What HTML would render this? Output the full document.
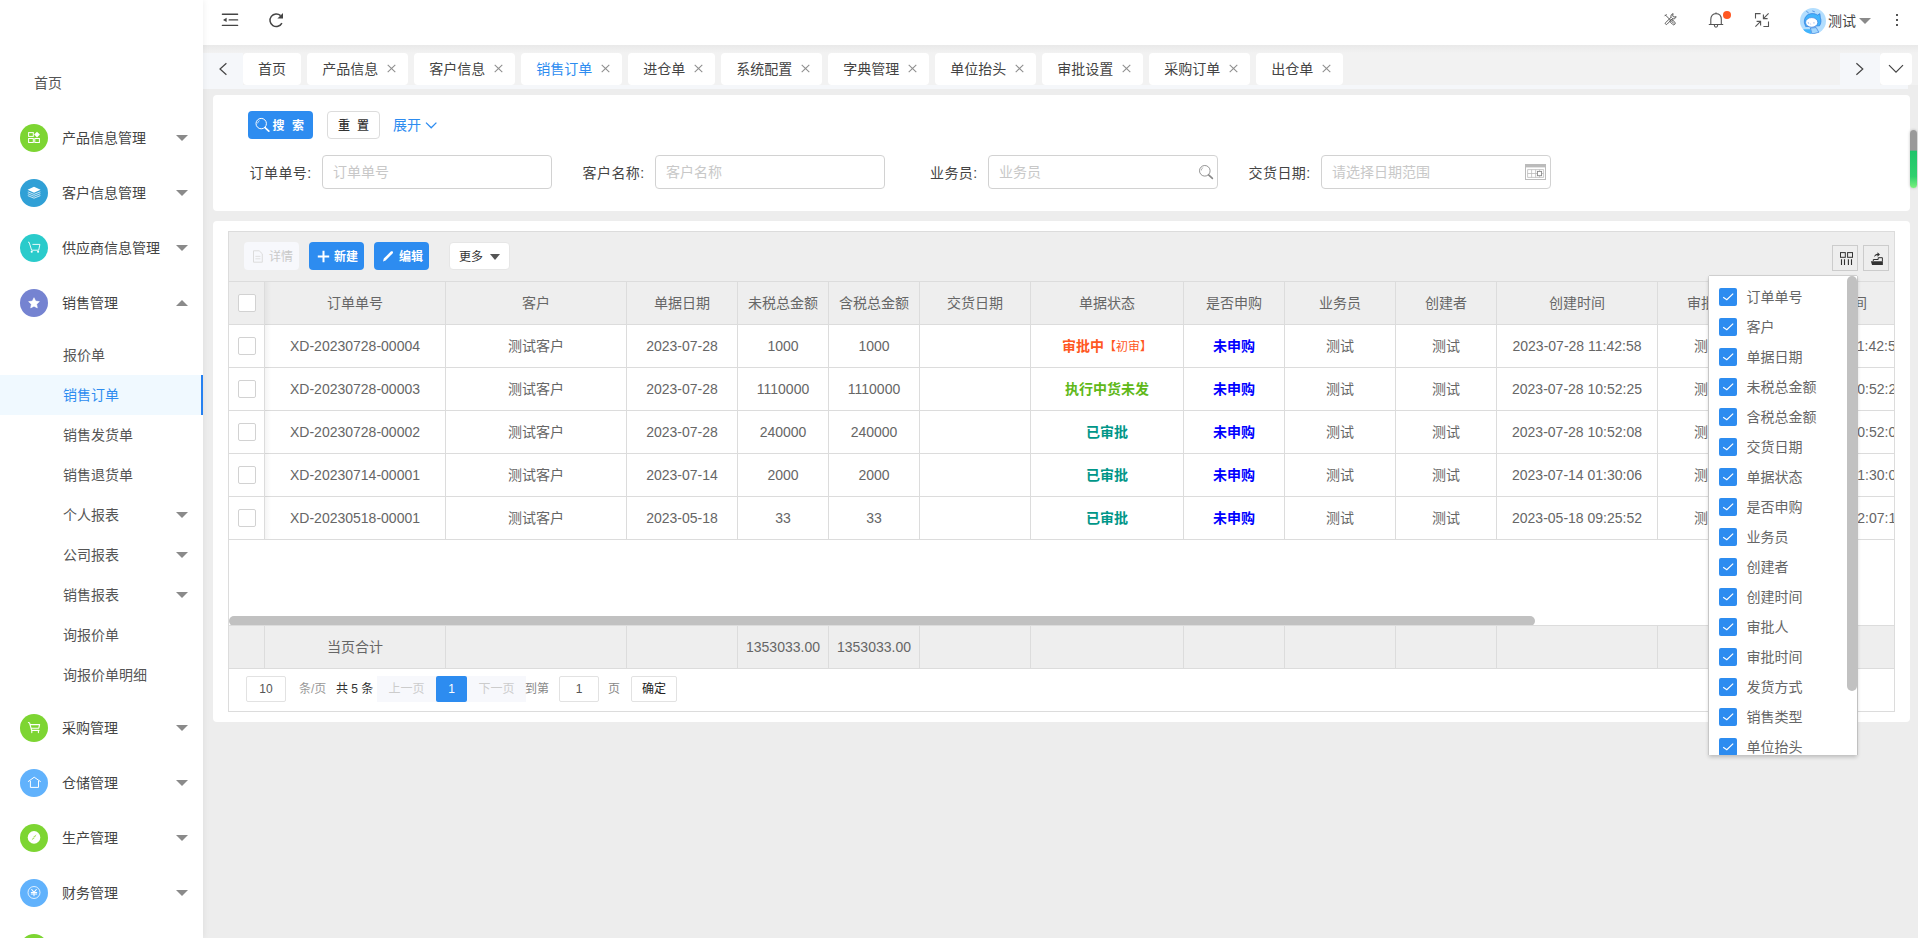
<!DOCTYPE html>
<html lang="zh-CN">
<head>
<meta charset="utf-8">
<title>销售订单</title>
<style>
*{box-sizing:border-box;margin:0;padding:0}
html,body{width:1918px;height:938px;overflow:hidden;background:#ededed}
body{font-family:"Liberation Sans","Noto Sans CJK SC",sans-serif;font-size:14px;color:#555;position:relative}
#side{position:absolute;left:0;top:0;width:203px;height:938px;background:#fff;overflow:hidden;z-index:5;box-shadow:1px 0 6px rgba(0,0,0,.06)}
#side .home{position:absolute;left:34px;top:73px;line-height:20px;color:#555}
.mi{position:absolute;left:0;width:203px;height:55px}
.mi .ic{position:absolute;left:20px;top:14px;width:28px;height:28px;border-radius:50%}
.mi .ic svg{position:absolute;left:0;top:0;width:28px;height:28px}
.mi .tx{position:absolute;left:62px;top:18px;line-height:20px;color:#444}
.car{position:absolute;left:176px;width:0;height:0;border-left:6px solid transparent;border-right:6px solid transparent}
.car.d{border-top:6px solid #8a8a8a}
.car.u{border-bottom:6px solid #8a8a8a}
.mi .car{top:25px}
.si{position:absolute;left:0;width:203px;height:40px}
.si .tx{position:absolute;left:63px;top:10px;line-height:20px;color:#555}
.si .car{top:17px}
.si.on{background:#f0f9ff;border-right:2px solid #2680f0}
.si.on .tx{color:#2d8cf0}
#hd{position:absolute;left:203px;top:0;width:1715px;height:45px;background:#fff}
#hd svg{position:absolute}
#tabs{position:absolute;left:203px;top:45px;width:1715px;height:40px;background:#f2f2f2}
.tab{position:absolute;top:8px;height:32px;background:#fff;border-radius:4px;line-height:32px;color:#444;padding-left:15px;white-space:nowrap}
.tab.on{color:#2d8cf0}
.tab .x{position:absolute;right:11.5px;top:10.7px;width:9px;height:9px}
.panel{position:absolute;background:#fff;border-radius:4px}
.inp{position:absolute;width:230px;height:34px;border:1px solid #d2d2d2;border-radius:4px;background:#fff;color:#c8c8c8;line-height:32px;padding-left:10px}
.lab{position:absolute;line-height:20px;color:#444;white-space:nowrap;letter-spacing:.4px}
.btn{position:absolute;height:28px;border-radius:4px;line-height:28px;font-size:12px;white-space:nowrap}
.vl{position:absolute;width:1px;background:#dcdcdc}
.hl{position:absolute;height:1px;background:#dcdcdc}
.cell{position:absolute;text-align:center;line-height:20px;white-space:nowrap;overflow:hidden}
.th{color:#666}
.td{color:#666}
.cb{position:absolute;width:18px;height:18px;border:1px solid #d2d2d2;border-radius:2px;background:#fff}
.pg{position:absolute;height:26px;line-height:27px;font-size:12px;white-space:nowrap}
#dd{position:absolute;left:1709px;top:276px;width:148px;height:479px;background:#fff;box-shadow:0 2px 4px rgba(0,0,0,.22),-1px 0 0 #dadada,1px 0 0 #d4d4d4,0 -1px 0 #d4d4d4;overflow:hidden}
.di{position:absolute;left:0;width:148px;height:30px}
.di .k{position:absolute;left:10px;top:6px;width:18px;height:18px;background:#2d8cf0;border-radius:2px}
.di .k svg{position:absolute;left:0;top:0}
.di .t{position:absolute;left:37.5px;top:5px;line-height:20px;color:#666;white-space:nowrap}

</style>
</head>
<body>
<div id="side">
<div class="home">首页</div>
<div class="mi" style="top:110px"><div class="ic" style="background:#7dd532"><svg viewBox="0 0 28 28"><rect x="8.6" y="8.6" width="4.7" height="3.8" fill="none" stroke="#fff" stroke-width="1"/><rect x="8.6" y="14.5" width="4.7" height="4" fill="none" stroke="#fff" stroke-width="1"/><rect x="14.8" y="14.5" width="4.6" height="4" fill="none" stroke="#fff" stroke-width="1"/><path d="M17 7.7L19.9 10.6L17 13.5L14.1 10.6Z" fill="#fff"/></svg></div><div class="tx">产品信息管理</div><div class="car d"></div></div>
<div class="mi" style="top:165px"><div class="ic" style="background:#30a0d6"><svg viewBox="0 0 28 28"><path d="M14 7.8L20.6 10.8L14 13.8L7.6 10.8Z" fill="#fff"/><path d="M7.8 12.8L14 15.4L20.4 12.8M7.8 14.7L14 17.3L20.4 14.7M7.8 16.6L14 19.2L20.4 16.6" fill="none" stroke="#fff" stroke-width="0.8" stroke-linejoin="round" opacity="0.9"/></svg></div><div class="tx">客户信息管理</div><div class="car d"></div></div>
<div class="mi" style="top:220px"><div class="ic" style="background:#2acbcb"><svg viewBox="0 0 28 28"><path d="M8.4 8.2L9.2 8.4L11.6 16.2H18.7L19.9 10.4H12.8" fill="none" stroke="#fff" stroke-width="0.9" stroke-linejoin="round" stroke-linecap="round"/><circle cx="11.7" cy="17.7" r="1.05" fill="#fff"/><circle cx="18.1" cy="17.7" r="1.05" fill="#fff"/></svg></div><div class="tx">供应商信息管理</div><div class="car d"></div></div>
<div class="mi" style="top:275px"><div class="ic" style="background:#7583d1"><svg viewBox="0 0 28 28"><path transform="translate(14 14.1) scale(0.9) translate(-14 -14.1)" d="M14 8.1l1.85 3.75 4.15.6-3 2.93.7 4.12L14 17.55l-3.7 1.95.7-4.12-3-2.93 4.15-.6z" fill="#fff" stroke="#fff" stroke-width="0.6" stroke-linejoin="round"/></svg></div><div class="tx">销售管理</div><div class="car u"></div></div>
<div class="si" style="top:335px"><div class="tx">报价单</div></div>
<div class="si on" style="top:375px"><div class="tx">销售订单</div></div>
<div class="si" style="top:415px"><div class="tx">销售发货单</div></div>
<div class="si" style="top:455px"><div class="tx">销售退货单</div></div>
<div class="si" style="top:495px"><div class="tx">个人报表</div><div class="car d"></div></div>
<div class="si" style="top:535px"><div class="tx">公司报表</div><div class="car d"></div></div>
<div class="si" style="top:575px"><div class="tx">销售报表</div><div class="car d"></div></div>
<div class="si" style="top:615px"><div class="tx">询报价单</div></div>
<div class="si" style="top:655px"><div class="tx">询报价单明细</div></div>
<div class="mi" style="top:700px"><div class="ic" style="background:#7dd532"><svg viewBox="0 0 28 28"><path d="M8.4 8.6L9.6 9L11.6 16.4H19M10.6 10.6H19.6L18.8 14.2H11.6M11.8 16.4V18.6M18.4 16.4V18.6" fill="none" stroke="#fff" stroke-width="1.1" stroke-linejoin="round" stroke-linecap="round"/></svg></div><div class="tx">采购管理</div><div class="car d"></div></div>
<div class="mi" style="top:755px"><div class="ic" style="background:#61b2fc"><svg viewBox="0 0 28 28"><path d="M8.3 12.5L14.2 8.2L20.4 12.5M10.4 12.2V18.4H18.5V12.2" fill="none" stroke="#fff" stroke-width="1" stroke-linejoin="round" stroke-linecap="round"/></svg></div><div class="tx">仓储管理</div><div class="car d"></div></div>
<div class="mi" style="top:810px"><div class="ic" style="background:#7dd532"><svg viewBox="0 0 28 28"><circle cx="14" cy="13.4" r="6.3" fill="#fff"/><path d="M16.6 10.2L14.6 14L11.5 16.6L13.5 12.8Z" fill="#a4df55"/><circle cx="14.05" cy="13.4" r="0.7" fill="#fff"/></svg></div><div class="tx">生产管理</div><div class="car d"></div></div>
<div class="mi" style="top:865px"><div class="ic" style="background:#61b2fc"><svg viewBox="0 0 28 28"><circle cx="14" cy="13.5" r="6" fill="none" stroke="#fff" stroke-width="0.8"/><path d="M11.7 10.5L14 13.3L16.3 10.5M14 13.2V16.8M11.3 13.4H16.7M11.3 14.9H16.7" fill="none" stroke="#fff" stroke-width="1.05" stroke-linecap="round"/></svg></div><div class="tx">财务管理</div><div class="car d"></div></div>
<div class="mi" style="top:920px"><div class="ic" style="background:#7dd532"></div></div>
</div>
<div id="hd"><svg style="left:17px;top:10px" width="20" height="20" viewBox="220 10 20 20"><path d="M222.4 14.2H237.6M229.2 19.9H237.6M222.4 25.4H237.6" stroke="#444" stroke-width="1.35" stroke-linecap="round" fill="none"/><path d="M223 19.9L226.6 17.7V22.1Z" fill="#444"/></svg><svg style="left:63px;top:10px" width="20" height="20" viewBox="266 10 20 20"><path d="M281.9 23.1A6.3 6.3 0 1 1 280.6 15.6" stroke="#444" stroke-width="1.5" fill="none"/><path d="M283 13V18.6H277.4Z" fill="#444"/></svg><svg style="left:1457px;top:10px" width="20" height="20" viewBox="1660 10 20 20"><g stroke="#555" fill="none" stroke-width="1.15" stroke-linecap="round" stroke-linejoin="round"><g transform="translate(1670.1 19.7) scale(0.8) rotate(45)"><path d="M-8 -1.2V1.2M-8 0H0.6"/><rect x="0.6" y="-1.9" width="7.6" height="3.8" rx="1.9"/><path d="M2.4 0H6.4"/></g><g transform="translate(1670.1 19.7) scale(0.8) rotate(-45)"><path d="M3 -1.3H-6.6A1.3 1.3 0 0 0 -6.6 1.3H3"/><path d="M3 -1.3C3.6 -3.3 6.3 -3.8 8 -2.7L5.6 -1V1L8 2.7C6.3 3.8 3.6 3.3 3 1.3"/></g></g></svg><svg style="left:1503px;top:8px" width="28" height="24" viewBox="1706 8 28 24"><path d="M1709.2 24.5H1722.8M1710.8 24.3V19.6C1710.8 15.8 1713 13.6 1716 13.6C1719 13.6 1721.3 15.8 1721.3 19.6V24.3M1714.3 25C1714.4 26.3 1715 27.2 1716 27.2C1717 27.2 1717.6 26.3 1717.7 25M1716 13.4V12.8" stroke="#555" stroke-width="1.1" fill="none" stroke-linecap="round"/><circle cx="1727" cy="15" r="4" fill="#ff5722"/></svg><svg style="left:1549px;top:10px" width="20" height="20" viewBox="1752 10 20 20"><path d="M1755.5 18.6V13.6H1760.6M1768.5 21.4V26.5H1763.4M1768.6 13.4L1763.4 18.6M1763.4 14.6V18.6H1767.6M1755.4 26.6L1760.6 21.4M1756.6 21.4H1760.6V25.4" stroke="#555" stroke-width="1.1" fill="none"/></svg><svg style="left:1597px;top:8px" width="26" height="26" viewBox="0 0 26 26"><defs><clipPath id="av"><circle cx="13" cy="13" r="13"/></clipPath></defs><g clip-path="url(#av)"><rect width="26" height="26" fill="#b3defe"/><path d="M6.3 3.2L8.7 5M12.3 2.9L14.8 3.8" stroke="#2a72d8" stroke-width="0.7" fill="none"/><path d="M4.4 15C3.8 9.6 7 5.7 12 5.6C14.4 5.5 16.4 6.2 17.6 7.1L19.9 5.6L20.4 9.8C21.4 12.2 21.1 15.6 19.5 17.8L5.7 18.6Z" fill="#42b4fc" stroke="#2a72d8" stroke-width="0.6" stroke-linejoin="round"/><ellipse cx="11.7" cy="14.4" rx="6.1" ry="4.8" fill="#fff" stroke="#2a72d8" stroke-width="0.6"/><path d="M8.2 14.2L8.5 15.6M10.3 15.6L10.7 16.4" stroke="#6d92e6" stroke-width="0.7" fill="none"/><rect x="13.4" y="14.1" width="1.1" height="1.5" fill="#a9c4f4"/><path d="M3.2 21.2L10.5 21.3L11.4 26H5Z" fill="#42b4fc"/><path d="M10.4 20L16.2 19.6L18.9 24.4L12 26Z" fill="#a4d7fd" stroke="#2a72d8" stroke-width="0.6" stroke-linejoin="round"/></g></svg><div style="position:absolute;left:1625px;top:11px;line-height:20px;color:#444">测试</div><div style="position:absolute;left:1656px;top:18px;width:0;height:0;border-left:6px solid transparent;border-right:6px solid transparent;border-top:6px solid #8a8a8a"></div><div style="position:absolute;left:1693px;top:14px;width:2px;height:2px;background:#555"></div><div style="position:absolute;left:1693px;top:19px;width:2px;height:2px;background:#555"></div><div style="position:absolute;left:1693px;top:24px;width:2px;height:2px;background:#555"></div></div>
<div id="tabs"><div style="position:absolute;left:0;top:40px;width:1705px;height:4px;background:#f5f7fa"></div><div style="position:absolute;left:0;top:8px;width:40px;height:36px;background:#f5f7fa"></div><div style="position:absolute;left:1637px;top:8px;width:40px;height:36px;background:#f5f7fa"></div><div style="position:absolute;left:0;top:0;width:1715px;height:8px;background:linear-gradient(#e9e9e9,#f2f2f2)"></div><svg style="position:absolute;left:12px;top:16px" width="16" height="16" viewBox="0 0 16 16"><path d="M11.4 2.2L5 8L11.4 13.8" fill="none" stroke="#444" stroke-width="1.2"/></svg><svg style="position:absolute;left:1648px;top:16px" width="16" height="16" viewBox="0 0 16 16"><path d="M5.4 2.2L11.8 8L5.4 13.8" fill="none" stroke="#444" stroke-width="1.2"/></svg><div style="position:absolute;left:1677px;top:8px;width:32px;height:32px;background:#fff;border-radius:4px"></div><svg style="position:absolute;left:1684px;top:16px" width="18" height="16" viewBox="0 0 18 16"><path d="M2 4.2L9 11.2L16 4.2" fill="none" stroke="#444" stroke-width="1.2"/></svg><div class="tab" style="left:40.00px;width:58.00px">首页</div><div class="tab" style="left:104.33px;width:100.67px">产品信息<svg class="x" viewBox="0 0 9 9"><path d="M0.7 0.9L8.3 8.1M8.3 0.9L0.7 8.1" stroke="#8f8f8f" stroke-width="1.1" fill="none"/></svg></div><div class="tab" style="left:211.33px;width:100.67px">客户信息<svg class="x" viewBox="0 0 9 9"><path d="M0.7 0.9L8.3 8.1M8.3 0.9L0.7 8.1" stroke="#8f8f8f" stroke-width="1.1" fill="none"/></svg></div><div class="tab on" style="left:318.33px;width:100.67px">销售订单<svg class="x" viewBox="0 0 9 9"><path d="M0.7 0.9L8.3 8.1M8.3 0.9L0.7 8.1" stroke="#8f8f8f" stroke-width="1.1" fill="none"/></svg></div><div class="tab" style="left:425.33px;width:86.67px">进仓单<svg class="x" viewBox="0 0 9 9"><path d="M0.7 0.9L8.3 8.1M8.3 0.9L0.7 8.1" stroke="#8f8f8f" stroke-width="1.1" fill="none"/></svg></div><div class="tab" style="left:518.33px;width:100.67px">系统配置<svg class="x" viewBox="0 0 9 9"><path d="M0.7 0.9L8.3 8.1M8.3 0.9L0.7 8.1" stroke="#8f8f8f" stroke-width="1.1" fill="none"/></svg></div><div class="tab" style="left:625.33px;width:100.67px">字典管理<svg class="x" viewBox="0 0 9 9"><path d="M0.7 0.9L8.3 8.1M8.3 0.9L0.7 8.1" stroke="#8f8f8f" stroke-width="1.1" fill="none"/></svg></div><div class="tab" style="left:732.33px;width:100.67px">单位抬头<svg class="x" viewBox="0 0 9 9"><path d="M0.7 0.9L8.3 8.1M8.3 0.9L0.7 8.1" stroke="#8f8f8f" stroke-width="1.1" fill="none"/></svg></div><div class="tab" style="left:839.33px;width:100.67px">审批设置<svg class="x" viewBox="0 0 9 9"><path d="M0.7 0.9L8.3 8.1M8.3 0.9L0.7 8.1" stroke="#8f8f8f" stroke-width="1.1" fill="none"/></svg></div><div class="tab" style="left:946.33px;width:100.67px">采购订单<svg class="x" viewBox="0 0 9 9"><path d="M0.7 0.9L8.3 8.1M8.3 0.9L0.7 8.1" stroke="#8f8f8f" stroke-width="1.1" fill="none"/></svg></div><div class="tab" style="left:1053.33px;width:86.67px">出仓单<svg class="x" viewBox="0 0 9 9"><path d="M0.7 0.9L8.3 8.1M8.3 0.9L0.7 8.1" stroke="#8f8f8f" stroke-width="1.1" fill="none"/></svg></div></div>
<div class="panel" id="sp" style="left:213px;top:95px;width:1697px;height:116px"><div class="btn" style="left:35px;top:16px;width:65px;background:#2d8cf0;color:#fff;font-weight:bold"><svg style="position:absolute;left:6px;top:6px" width="16" height="16" viewBox="0 0 16 16"><circle cx="7.2" cy="6.6" r="5.2" fill="none" stroke="#fff" stroke-width="1"/><path d="M3.6 6.4A3.4 3.4 0 0 1 5.6 3.6" fill="none" stroke="#fff" stroke-width="0.7"/><path d="M11 10.6L14.8 14.2" stroke="#fff" stroke-width="1.7" stroke-linecap="round"/></svg><span style="position:absolute;left:24.5px;top:1px">搜</span><span style="position:absolute;left:44px;top:1px">索</span></div><div class="btn" style="left:114px;top:16px;width:53px;background:#fff;border:1px solid #dcdcdc;color:#333;font-weight:500;line-height:26px"><span style="position:absolute;left:10px;top:1px">重</span><span style="position:absolute;left:29px;top:1px">置</span></div><div style="position:absolute;left:180px;top:20px;line-height:20px;color:#2d8cf0">展开</div><svg style="position:absolute;left:211px;top:24px" width="14" height="12" viewBox="0 0 14 12"><path d="M2 3.6L7.2 8.8L12.4 3.6" fill="none" stroke="#2d8cf0" stroke-width="1.3"/></svg><div class="lab" style="right:1598.5px;top:68px">订单单号:</div><div class="inp" style="left:109px;top:60px">订单单号</div><div class="lab" style="right:1265.5px;top:68px">客户名称:</div><div class="inp" style="left:442px;top:60px">客户名称</div><div class="lab" style="right:932.5px;top:68px">业务员:</div><div class="inp" style="left:775px;top:60px">业务员</div><div class="lab" style="right:599.5px;top:68px">交货日期:</div><div class="inp" style="left:1108px;top:60px">请选择日期范围</div><svg style="position:absolute;left:985px;top:69px" width="16" height="16" viewBox="0 0 16 16"><circle cx="6.8" cy="6.8" r="5.3" fill="none" stroke="#888" stroke-width="0.9"/><path d="M3.2 6.6A3.4 3.4 0 0 1 5.2 3.6" fill="none" stroke="#888" stroke-width="0.6"/><path d="M10.6 10.8L14.4 14.4" stroke="#888" stroke-width="1.6" stroke-linecap="round"/></svg><svg style="position:absolute;left:1311px;top:68px" width="24" height="18" viewBox="0 0 24 18"><rect x="1.5" y="1.5" width="20" height="15" fill="#fff" stroke="#bbb" stroke-width="1"/><rect x="1" y="1" width="21" height="3.4" fill="#bbb"/><path d="M3.6 6.6H19.6V14.4H3.6ZM7.6 6.6V14.4M11.6 6.6V14.4M15.6 6.6V14.4M3.6 10.5H19.6" stroke="#bbb" stroke-width="0.8" fill="none"/><rect x="13.4" y="8.4" width="4.2" height="4.3" fill="#fff" stroke="#888" stroke-width="0.9"/></svg></div>
<div class="panel" id="tp" style="left:213px;top:221px;width:1697px;height:501px"><div style="position:absolute;left:15px;top:10px;width:1667px;height:481px;border:1px solid #dcdcdc;overflow:hidden"><div style="position:absolute;left:0;top:384px;width:1306px;height:10px;background:#c1c1c1;border-radius:5px"></div><div style="position:absolute;left:0;top:0;width:1665px;height:49px;background:#eee"></div><div style="position:absolute;left:0;top:49px;width:1665px;height:44px;background:#eee"></div><div style="position:absolute;left:0;top:393px;width:1665px;height:44px;background:#eee"></div><div class="hl" style="left:0;top:49px;width:1665px"></div><div class="hl" style="left:0;top:92px;width:1665px"></div><div class="hl" style="left:0;top:135px;width:1665px"></div><div class="hl" style="left:0;top:178px;width:1665px"></div><div class="hl" style="left:0;top:221px;width:1665px"></div><div class="hl" style="left:0;top:264px;width:1665px"></div><div class="hl" style="left:0;top:307px;width:1665px"></div><div class="hl" style="left:0;top:393px;width:1665px"></div><div class="hl" style="left:0;top:436px;width:1665px"></div><div class="vl" style="left:35px;top:49px;height:258px"></div><div class="vl" style="left:35px;top:393px;height:43px"></div><div class="vl" style="left:216px;top:49px;height:258px"></div><div class="vl" style="left:216px;top:393px;height:43px"></div><div class="vl" style="left:397px;top:49px;height:258px"></div><div class="vl" style="left:397px;top:393px;height:43px"></div><div class="vl" style="left:508px;top:49px;height:258px"></div><div class="vl" style="left:508px;top:393px;height:43px"></div><div class="vl" style="left:599px;top:49px;height:258px"></div><div class="vl" style="left:599px;top:393px;height:43px"></div><div class="vl" style="left:690px;top:49px;height:258px"></div><div class="vl" style="left:690px;top:393px;height:43px"></div><div class="vl" style="left:801px;top:49px;height:258px"></div><div class="vl" style="left:801px;top:393px;height:43px"></div><div class="vl" style="left:954px;top:49px;height:258px"></div><div class="vl" style="left:954px;top:393px;height:43px"></div><div class="vl" style="left:1055px;top:49px;height:258px"></div><div class="vl" style="left:1055px;top:393px;height:43px"></div><div class="vl" style="left:1166px;top:49px;height:258px"></div><div class="vl" style="left:1166px;top:393px;height:43px"></div><div class="vl" style="left:1267px;top:49px;height:258px"></div><div class="vl" style="left:1267px;top:393px;height:43px"></div><div class="vl" style="left:1428px;top:49px;height:258px"></div><div class="vl" style="left:1428px;top:393px;height:43px"></div><div class="vl" style="left:1529px;top:49px;height:258px"></div><div class="vl" style="left:1529px;top:393px;height:43px"></div><div style="position:absolute;left:36px;top:50px;width:6px;height:257px;background:linear-gradient(90deg,rgba(0,0,0,.045),rgba(0,0,0,0))"></div><div class="btn" style="left:15px;top:10px;width:55px;background:#f7f8fc;color:#c9c9c9"><svg style="position:absolute;left:8px;top:8px" width="12" height="13" viewBox="0 0 12 13"><path d="M1.5 0.8H7.2L10.3 3.8V12.2H1.5Z" fill="none" stroke="#dcdcdc" stroke-width="1"/><path d="M3.4 6.4H8.4M3.4 8.8H8.4" stroke="#dcdcdc" stroke-width="0.9"/></svg><span style="position:absolute;left:25px;top:1px">详情</span></div><div class="btn" style="left:80px;top:10px;width:55px;background:#2d8cf0;color:#fff;font-weight:bold"><svg style="position:absolute;left:7.5px;top:7.5px" width="13" height="13" viewBox="0 0 13 13"><path d="M6.5 0.8V12.2M0.8 6.5H12.2" stroke="#fff" stroke-width="2"/></svg><span style="position:absolute;left:25px;top:1px">新建</span></div><div class="btn" style="left:145px;top:10px;width:55px;background:#2d8cf0;color:#fff;font-weight:bold"><svg style="position:absolute;left:8px;top:8px" width="13" height="13" viewBox="0 0 13 13"><path d="M1 11.4L1.8 8.6L8.8 1.6C9.4 1 10.2 1 10.7 1.5C11.2 2 11.2 2.8 10.6 3.4L3.6 10.4Z" fill="#fff"/></svg><span style="position:absolute;left:25px;top:1px">编辑</span></div><div class="btn" style="left:220px;top:10px;width:61px;background:#fff;color:#333;border:1px solid #e6e6e6;line-height:26px"><span style="position:absolute;left:9px;top:1px">更多</span><div style="position:absolute;left:39.5px;top:11px;width:0;height:0;border-left:5.5px solid transparent;border-right:5.5px solid transparent;border-top:6px solid #555"></div></div><div style="position:absolute;left:1603px;top:13px;width:26px;height:26px;border:1px solid #ccc"><svg style="position:absolute;left:0;top:0" width="24" height="24" viewBox="1833 246 24 24"><rect x="1840.5" y="252.6" width="4.8" height="4.7" fill="none" stroke="#333" stroke-width="1"/><rect x="1847.6" y="252.6" width="4.9" height="4.7" fill="none" stroke="#333" stroke-width="1"/><path d="M1841.5 259.2V265M1844.5 259.2V265M1848.4 259.2V265M1851.5 259.2V265" stroke="#333" stroke-width="1.1"/></svg></div><div style="position:absolute;left:1634px;top:13px;width:26px;height:26px;border:1px solid #ccc"><svg style="position:absolute;left:0;top:0" width="24" height="24" viewBox="1864 246 24 24"><path d="M1870.9 261.2H1882.9V265H1872.1Z" fill="#333"/><path d="M1873.3 261V259.5H1878.2V257.7H1882.4V261.4" fill="none" stroke="#333" stroke-width="1"/><path d="M1874.3 257.2C1874.3 255 1875.6 253.8 1877.5 253.7V252.2L1880 254.5L1877.5 256.7V255.3C1876.2 255.3 1875.1 255.8 1874.3 257.2Z" fill="#333"/></svg></div><div class="cell th" style="left:36px;top:61px;width:180px">订单单号</div><div class="cell th" style="left:217px;top:61px;width:180px">客户</div><div class="cell th" style="left:398px;top:61px;width:110px">单据日期</div><div class="cell th" style="left:509px;top:61px;width:90px">未税总金额</div><div class="cell th" style="left:600px;top:61px;width:90px">含税总金额</div><div class="cell th" style="left:691px;top:61px;width:110px">交货日期</div><div class="cell th" style="left:802px;top:61px;width:152px">单据状态</div><div class="cell th" style="left:955px;top:61px;width:100px">是否申购</div><div class="cell th" style="left:1056px;top:61px;width:110px">业务员</div><div class="cell th" style="left:1167px;top:61px;width:100px">创建者</div><div class="cell th" style="left:1268px;top:61px;width:160px">创建时间</div><div class="cell th" style="left:1429px;top:61px;width:100px">审批人</div><div class="cell th" style="left:1530px;top:61px;width:160px">审批时间</div><div class="cb" style="left:9px;top:62px"></div><div class="cb" style="left:9px;top:105px"></div><div class="cell td" style="left:36px;top:104px;width:180px">XD-20230728-00004</div><div class="cell td" style="left:217px;top:104px;width:180px">测试客户</div><div class="cell td" style="left:398px;top:104px;width:110px">2023-07-28</div><div class="cell td" style="left:509px;top:104px;width:90px">1000</div><div class="cell td" style="left:600px;top:104px;width:90px">1000</div><div class="cell td" style="left:802px;top:104px;width:152px"><b style="color:#ff5722">审批中</b><span style="color:#ff5722;font-size:12px">【初审】</span></div><div class="cell td" style="left:955px;top:104px;width:100px"><b style="color:#0000ff">未申购</b></div><div class="cell td" style="left:1056px;top:104px;width:110px">测试</div><div class="cell td" style="left:1167px;top:104px;width:100px">测试</div><div class="cell td" style="left:1268px;top:104px;width:160px">2023-07-28 11:42:58</div><div class="cell td" style="left:1429px;top:104px;width:100px">测试</div><div class="cell td" style="left:1530px;top:104px;width:160px">2023-07-28 11:42:59</div><div class="cb" style="left:9px;top:148px"></div><div class="cell td" style="left:36px;top:147px;width:180px">XD-20230728-00003</div><div class="cell td" style="left:217px;top:147px;width:180px">测试客户</div><div class="cell td" style="left:398px;top:147px;width:110px">2023-07-28</div><div class="cell td" style="left:509px;top:147px;width:90px">1110000</div><div class="cell td" style="left:600px;top:147px;width:90px">1110000</div><div class="cell td" style="left:802px;top:147px;width:152px"><b style="color:#5fb818">执行中货未发</b></div><div class="cell td" style="left:955px;top:147px;width:100px"><b style="color:#0000ff">未申购</b></div><div class="cell td" style="left:1056px;top:147px;width:110px">测试</div><div class="cell td" style="left:1167px;top:147px;width:100px">测试</div><div class="cell td" style="left:1268px;top:147px;width:160px">2023-07-28 10:52:25</div><div class="cell td" style="left:1429px;top:147px;width:100px">测试</div><div class="cell td" style="left:1530px;top:147px;width:160px">2023-07-28 10:52:26</div><div class="cb" style="left:9px;top:191px"></div><div class="cell td" style="left:36px;top:190px;width:180px">XD-20230728-00002</div><div class="cell td" style="left:217px;top:190px;width:180px">测试客户</div><div class="cell td" style="left:398px;top:190px;width:110px">2023-07-28</div><div class="cell td" style="left:509px;top:190px;width:90px">240000</div><div class="cell td" style="left:600px;top:190px;width:90px">240000</div><div class="cell td" style="left:802px;top:190px;width:152px"><b style="color:#009688">已审批</b></div><div class="cell td" style="left:955px;top:190px;width:100px"><b style="color:#0000ff">未申购</b></div><div class="cell td" style="left:1056px;top:190px;width:110px">测试</div><div class="cell td" style="left:1167px;top:190px;width:100px">测试</div><div class="cell td" style="left:1268px;top:190px;width:160px">2023-07-28 10:52:08</div><div class="cell td" style="left:1429px;top:190px;width:100px">测试</div><div class="cell td" style="left:1530px;top:190px;width:160px">2023-07-28 10:52:09</div><div class="cb" style="left:9px;top:234px"></div><div class="cell td" style="left:36px;top:233px;width:180px">XD-20230714-00001</div><div class="cell td" style="left:217px;top:233px;width:180px">测试客户</div><div class="cell td" style="left:398px;top:233px;width:110px">2023-07-14</div><div class="cell td" style="left:509px;top:233px;width:90px">2000</div><div class="cell td" style="left:600px;top:233px;width:90px">2000</div><div class="cell td" style="left:802px;top:233px;width:152px"><b style="color:#009688">已审批</b></div><div class="cell td" style="left:955px;top:233px;width:100px"><b style="color:#0000ff">未申购</b></div><div class="cell td" style="left:1056px;top:233px;width:110px">测试</div><div class="cell td" style="left:1167px;top:233px;width:100px">测试</div><div class="cell td" style="left:1268px;top:233px;width:160px">2023-07-14 01:30:06</div><div class="cell td" style="left:1429px;top:233px;width:100px">测试</div><div class="cell td" style="left:1530px;top:233px;width:160px">2023-07-14 01:30:07</div><div class="cb" style="left:9px;top:277px"></div><div class="cell td" style="left:36px;top:276px;width:180px">XD-20230518-00001</div><div class="cell td" style="left:217px;top:276px;width:180px">测试客户</div><div class="cell td" style="left:398px;top:276px;width:110px">2023-05-18</div><div class="cell td" style="left:509px;top:276px;width:90px">33</div><div class="cell td" style="left:600px;top:276px;width:90px">33</div><div class="cell td" style="left:802px;top:276px;width:152px"><b style="color:#009688">已审批</b></div><div class="cell td" style="left:955px;top:276px;width:100px"><b style="color:#0000ff">未申购</b></div><div class="cell td" style="left:1056px;top:276px;width:110px">测试</div><div class="cell td" style="left:1167px;top:276px;width:100px">测试</div><div class="cell td" style="left:1268px;top:276px;width:160px">2023-05-18 09:25:52</div><div class="cell td" style="left:1429px;top:276px;width:100px">测试</div><div class="cell td" style="left:1530px;top:276px;width:160px">2023-05-18 12:07:13</div><div class="cell td" style="left:36px;top:405px;width:180px">当页合计</div><div class="cell td" style="left:509px;top:405px;width:90px">1353033.00</div><div class="cell td" style="left:600px;top:405px;width:90px">1353033.00</div><div class="pg" style="left:17px;top:444px;width:40px;border:1px solid #e2e2e2;border-radius:2px;text-align:center;color:#555;line-height:25px">10</div><div class="pg" style="left:70px;top:444px;color:#999">条/页</div><div class="pg" style="left:107px;top:444px;color:#333">共 5 条</div><div class="pg" style="left:148px;top:444px;width:59px;background:#f7f8fc;color:#ccc;text-align:center">上一页</div><div class="pg" style="left:207px;top:444px;width:31px;background:#2d8cf0;color:#fff;text-align:center;border-radius:2px">1</div><div class="pg" style="left:238px;top:444px;width:59px;background:#f7f8fc;color:#ccc;text-align:center">下一页</div><div class="pg" style="left:296px;top:444px;color:#888">到第</div><div class="pg" style="left:330px;top:444px;width:40px;border:1px solid #e2e2e2;border-radius:2px;text-align:center;color:#555;line-height:25px">1</div><div class="pg" style="left:379px;top:444px;color:#888">页</div><div class="pg" style="left:402px;top:444px;width:46px;border:1px solid #e2e2e2;border-radius:2px;text-align:center;color:#222;line-height:25px">确定</div></div></div>
<div id="dd"><div class="di" style="top:6px"><div class="k"><svg width="18" height="18" viewBox="0 0 18 18"><path d="M4.2 9.3L7.8 11.7L14.2 5.6" fill="none" stroke="#fff" stroke-width="1.2"/></svg></div><div class="t">订单单号</div></div><div class="di" style="top:36px"><div class="k"><svg width="18" height="18" viewBox="0 0 18 18"><path d="M4.2 9.3L7.8 11.7L14.2 5.6" fill="none" stroke="#fff" stroke-width="1.2"/></svg></div><div class="t">客户</div></div><div class="di" style="top:66px"><div class="k"><svg width="18" height="18" viewBox="0 0 18 18"><path d="M4.2 9.3L7.8 11.7L14.2 5.6" fill="none" stroke="#fff" stroke-width="1.2"/></svg></div><div class="t">单据日期</div></div><div class="di" style="top:96px"><div class="k"><svg width="18" height="18" viewBox="0 0 18 18"><path d="M4.2 9.3L7.8 11.7L14.2 5.6" fill="none" stroke="#fff" stroke-width="1.2"/></svg></div><div class="t">未税总金额</div></div><div class="di" style="top:126px"><div class="k"><svg width="18" height="18" viewBox="0 0 18 18"><path d="M4.2 9.3L7.8 11.7L14.2 5.6" fill="none" stroke="#fff" stroke-width="1.2"/></svg></div><div class="t">含税总金额</div></div><div class="di" style="top:156px"><div class="k"><svg width="18" height="18" viewBox="0 0 18 18"><path d="M4.2 9.3L7.8 11.7L14.2 5.6" fill="none" stroke="#fff" stroke-width="1.2"/></svg></div><div class="t">交货日期</div></div><div class="di" style="top:186px"><div class="k"><svg width="18" height="18" viewBox="0 0 18 18"><path d="M4.2 9.3L7.8 11.7L14.2 5.6" fill="none" stroke="#fff" stroke-width="1.2"/></svg></div><div class="t">单据状态</div></div><div class="di" style="top:216px"><div class="k"><svg width="18" height="18" viewBox="0 0 18 18"><path d="M4.2 9.3L7.8 11.7L14.2 5.6" fill="none" stroke="#fff" stroke-width="1.2"/></svg></div><div class="t">是否申购</div></div><div class="di" style="top:246px"><div class="k"><svg width="18" height="18" viewBox="0 0 18 18"><path d="M4.2 9.3L7.8 11.7L14.2 5.6" fill="none" stroke="#fff" stroke-width="1.2"/></svg></div><div class="t">业务员</div></div><div class="di" style="top:276px"><div class="k"><svg width="18" height="18" viewBox="0 0 18 18"><path d="M4.2 9.3L7.8 11.7L14.2 5.6" fill="none" stroke="#fff" stroke-width="1.2"/></svg></div><div class="t">创建者</div></div><div class="di" style="top:306px"><div class="k"><svg width="18" height="18" viewBox="0 0 18 18"><path d="M4.2 9.3L7.8 11.7L14.2 5.6" fill="none" stroke="#fff" stroke-width="1.2"/></svg></div><div class="t">创建时间</div></div><div class="di" style="top:336px"><div class="k"><svg width="18" height="18" viewBox="0 0 18 18"><path d="M4.2 9.3L7.8 11.7L14.2 5.6" fill="none" stroke="#fff" stroke-width="1.2"/></svg></div><div class="t">审批人</div></div><div class="di" style="top:366px"><div class="k"><svg width="18" height="18" viewBox="0 0 18 18"><path d="M4.2 9.3L7.8 11.7L14.2 5.6" fill="none" stroke="#fff" stroke-width="1.2"/></svg></div><div class="t">审批时间</div></div><div class="di" style="top:396px"><div class="k"><svg width="18" height="18" viewBox="0 0 18 18"><path d="M4.2 9.3L7.8 11.7L14.2 5.6" fill="none" stroke="#fff" stroke-width="1.2"/></svg></div><div class="t">发货方式</div></div><div class="di" style="top:426px"><div class="k"><svg width="18" height="18" viewBox="0 0 18 18"><path d="M4.2 9.3L7.8 11.7L14.2 5.6" fill="none" stroke="#fff" stroke-width="1.2"/></svg></div><div class="t">销售类型</div></div><div class="di" style="top:456px"><div class="k"><svg width="18" height="18" viewBox="0 0 18 18"><path d="M4.2 9.3L7.8 11.7L14.2 5.6" fill="none" stroke="#fff" stroke-width="1.2"/></svg></div><div class="t">单位抬头</div></div><div style="position:absolute;left:138px;top:0;width:10px;height:415px;background:#c1c1c1;border-radius:5px"></div></div>
<div style="position:absolute;left:1910px;top:130px;width:7px;height:58px;border-radius:4px;background:linear-gradient(#9a9a9a 0,#9a9a9a 35%,#1fc46a 36%,#2fd06e 80%,#7cf07c 100%);box-shadow:0 0 3px rgba(0,0,0,.25)"></div>
</body>
</html>
